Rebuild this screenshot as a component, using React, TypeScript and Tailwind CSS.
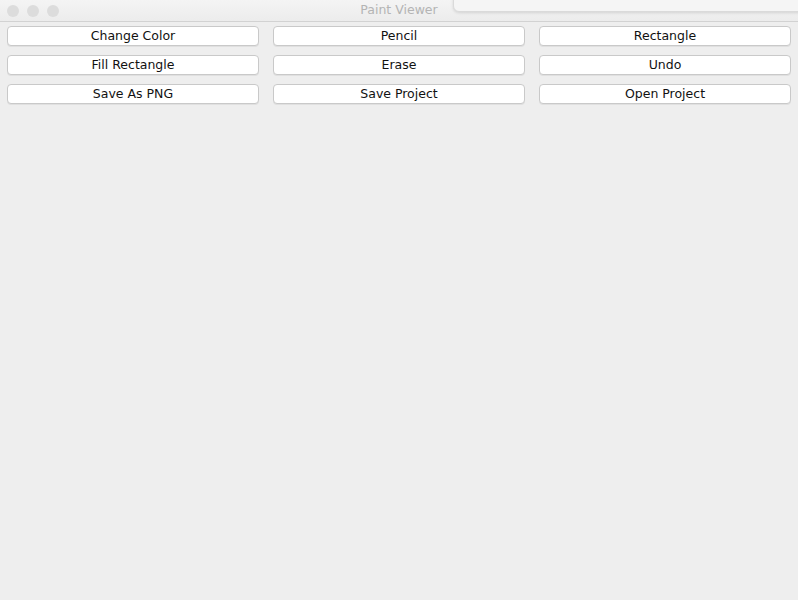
const buttons = [
  "Change Color",
  "Pencil",
  "Rectangle",
  "Fill Rectangle",
  "Erase",
  "Undo",
  "Save As PNG",
  "Save Project",
  "Open Project",
];

export default function App() {
  return (
    <div
      className="relative w-[798px] h-[600px] overflow-hidden bg-[#eeeeee]"
      style={{ fontFamily: '"DejaVu Sans", "Liberation Sans", sans-serif' }}
    >
      {/* title bar */}
      <div className="relative h-[22px] flex items-center border-b border-[#d2d2d2] bg-gradient-to-b from-[#f4f4f4] to-[#ececec]">
        <div className="flex items-center gap-[8px] pl-[7px]">
          <span className="h-[12px] w-[12px] rounded-full bg-[#dcdcdc]" />
          <span className="h-[12px] w-[12px] rounded-full bg-[#dcdcdc]" />
          <span className="h-[12px] w-[12px] rounded-full bg-[#dcdcdc]" />
        </div>
        <div className="absolute inset-0 flex items-center justify-center text-[12.5px] text-[#b4b4b4]">
          Paint Viewer
        </div>
      </div>

      {/* other window peeking over the top */}
      <div className="absolute left-[453px] top-[-20px] h-[32px] w-[400px] rounded-bl-[6px] border border-[#dadada] bg-[#f5f5f5] shadow-[0_1px_3px_rgba(0,0,0,0.12)]" />

      <div className="grid grid-cols-3 gap-x-[14px] gap-y-[9px] px-[7px] pt-[4px]">
        {buttons.map((label) => (
          <button
            key={label}
            className="h-[20px] rounded-[4px] border border-[#c9c9c9] bg-white text-[12.5px] leading-none text-[#111111] shadow-[0_1px_0_rgba(0,0,0,0.06)]"
          >
            {label}
          </button>
        ))}
      </div>
    </div>
  );
}
